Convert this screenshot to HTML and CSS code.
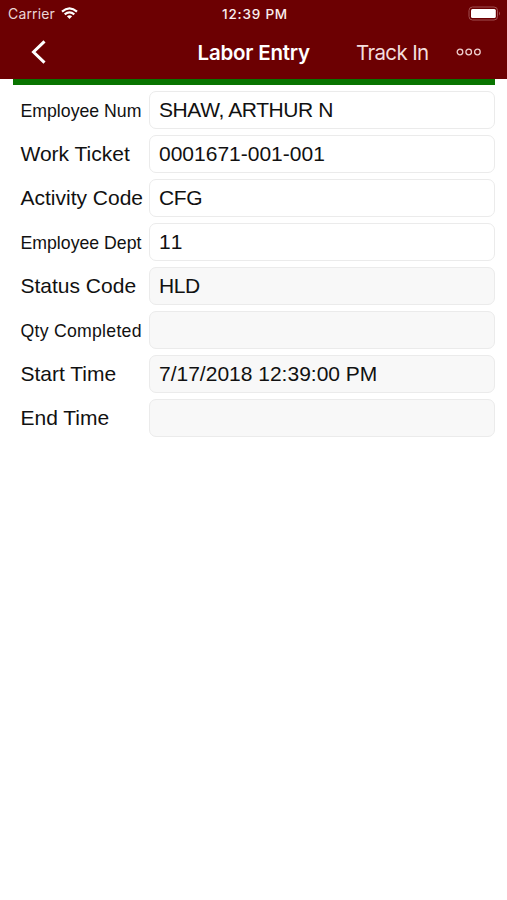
FILE: index.html
```html
<!DOCTYPE html>
<html lang="en">
<head>
<meta charset="utf-8">
<title>Labor Entry</title>
<link rel="stylesheet" href="styles.css">
</head>
<body>
<header class="top">
  <div class="status">
    <div class="carrier"><span>Carrier</span>
      <svg class="wifi" viewBox="0 0 17 12" width="17" height="12"><g fill="none" stroke="#fff" stroke-width="2.2"><path d="M1 4.6Q8.500-1.800 16 4.600"/><path d="M3.700 7.400Q8.500 3.300 13.300 7.400"/></g><path d="M5.900 9.300Q8.500 7.200 11.100 9.300L8.500 12z" fill="#fff"/></svg>
    </div>
    <span class="clock">12:39 PM</span>
    <svg class="battery" viewBox="0 0 33 15" width="33" height="15"><rect x="1" y="1" width="28.500" height="13" rx="3.500" fill="none" stroke="#a04f50"/><rect x="3" y="3" width="24.800" height="9" rx="1.500" fill="#fff"/><path d="M31 5.500q2 2 0 4z" fill="#a04f50"/></svg>
  </div>
  <nav class="bar">
    <svg class="back" viewBox="0 0 16 24" width="16" height="24"><path d="M13.500 1.300L2.500 12l11 10.700" fill="none" stroke="#fff" stroke-width="3"/></svg>
    <h1 class="title">Labor Entry</h1>
    <span class="action">Track In</span>
    <svg class="more" viewBox="0 0 26 8" width="26" height="8"><g fill="none" stroke="#efd0d0" stroke-width="1.300"><circle cx="4" cy="4" r="2.800"/><circle cx="12.700" cy="4" r="2.800"/><circle cx="21.400" cy="4" r="2.800"/></g></svg>
  </nav>
</header>
<main class="form">
  <div class="row"><span class="label small">Employee Num</span><div class="field caps">SHAW, ARTHUR N</div></div>
  <div class="row"><span class="label">Work Ticket</span><div class="field">0001671-001-001</div></div>
  <div class="row"><span class="label">Activity Code</span><div class="field caps">CFG</div></div>
  <div class="row"><span class="label small">Employee Dept</span><div class="field digits">11</div></div>
  <div class="row"><span class="label">Status Code</span><div class="field readonly caps">HLD</div></div>
  <div class="row"><span class="label small qty">Qty Completed</span><div class="field readonly"></div></div>
  <div class="row"><span class="label">Start Time</span><div class="field readonly">7/17/2018 12:39:00 PM</div></div>
  <div class="row"><span class="label">End Time</span><div class="field readonly"></div></div>
</main>
</body>
</html>
```
FILE: styles.css
```css
* { box-sizing: border-box; }
body { margin: 0; background: #fff; color: #111; font-family: "Liberation Sans", Arial, sans-serif; }
.top { height: 79px; background: #6c0002; color: #fff; font-family: Inter, sans-serif; white-space: nowrap; }
.status { height: 27px; display: grid; grid-template-columns: 1fr auto 1fr; align-items: center; padding: 0 5px 0 8px; }
.carrier { display: flex; align-items: center; gap: 6px; font-size: 14px; letter-spacing: 0.15px; color: #ead6d6; }
.wifi { margin: -1px 0 0 0.5px; }
.clock { font-size: 13.5px; font-weight: 500; letter-spacing: 0.8px; color: #faeeee; }
.battery { justify-self: end; margin-right: 1px; }
.bar { height: 50px; display: flex; align-items: center; padding-left: 30.5px; }
.title { margin: 1px 0 0 151px; width: 158.500px; font-size: 20.5px; font-weight: 600; letter-spacing: -0.2px; line-height: 26px; }
.action { margin-top: 1px; width: 100px; font-size: 20.5px; letter-spacing: -0.65px; line-height: 26px; color: #f3dede; }
.form { margin: 0 12px 0 13px; border-top: 6px solid #087400; padding-top: 6px; }
.row { display: flex; align-items: center; height: 38px; margin-bottom: 6px; padding-left: 7px; }
.label { width: 129px; padding-left: 0.5px; font-size: 21px; line-height: 26px; white-space: nowrap; }
.small { padding-top: 1px; font-size: 17.7px; }
.qty { letter-spacing: 0.25px; }
.field { flex: 1; height: 38px; border: 1px solid #ebebeb; border-radius: 7px; padding-left: 9px; font-size: 21px; line-height: 36px; white-space: nowrap; }
.caps { letter-spacing: -0.4px; }
.digits { font-kerning: none; }
.readonly { background: #f8f8f8; }
```
